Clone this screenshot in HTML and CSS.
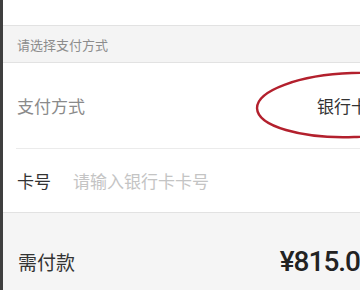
FILE: index.html
```html
<!DOCTYPE html>
<html lang="zh-CN">
<head>
<meta charset="utf-8">
<title>支付方式</title>
<link rel="stylesheet" href="styles.css">
</head>
<body>
<div class="screen">
  <div class="edge"></div>
  <div class="page">
    <div class="top"></div>
    <div class="section-head">请选择支付方式</div>
    <div class="form">
      <div class="row pay">
        <span class="label muted">支付方式</span>
        <span class="value">银行卡</span>
        <svg class="mark" width="150" height="72" viewBox="0 0 150 72">
          <ellipse cx="100" cy="36" rx="96" ry="32" fill="none" stroke="#b3202d" stroke-width="2.4" transform="rotate(-2 100 36)"/>
        </svg>
      </div>
      <div class="divider"></div>
      <div class="row card">
        <span class="label">卡号</span>
        <span class="placeholder">请输入银行卡卡号</span>
      </div>
    </div>
    <div class="total">
      <span class="total-label">需付款</span>
      <span class="amount">¥815.0</span>
    </div>
  </div>
</div>
</body>
</html>
```
FILE: styles.css
```css
html, body {
  margin: 0;
  padding: 0;
  height: 290px;
  overflow: hidden;
  background: #ffffff;
  font-family: "Noto Sans CJK SC", "Noto Sans", sans-serif;
}
.screen {
  display: flex;
  height: 290px;
}
.edge {
  width: 3px;
  flex-shrink: 0;
  background: #3f3f3f;
}
.page {
  width: 379px;
  flex-shrink: 0;
  display: flex;
  flex-direction: column;
}
.top {
  height: 25px;
  background: #ffffff;
}
.section-head {
  height: 36px;
  background: #f4f4f4;
  border-top: 1px solid #e2e2e2;
  border-bottom: 1px solid #e2e2e2;
  display: flex;
  align-items: center;
  padding-left: 14px;
  font-size: 13px;
  color: #8c8c8c;
}
.form {
  background: #ffffff;
}
.row {
  display: flex;
  align-items: center;
  padding: 0 14px;
  font-size: 17px;
}
.pay {
  height: 85px;
  position: relative;
}
.card {
  height: 63px;
}
.label {
  color: #333333;
}
.label.muted {
  color: #8a8a8a;
}
.value {
  margin-left: auto;
  color: #333333;
}
.placeholder {
  margin-left: 22px;
  color: #c4c4c4;
}
.mark {
  position: absolute;
  left: 250px;
  top: 6px;
}
.divider {
  height: 1px;
  margin-left: 13px;
  background: #ebebeb;
}
.total {
  flex: 1;
  background: #f5f5f5;
  border-top: 1px solid #e2e2e2;
  display: flex;
  align-items: center;
  padding: 20px 22px 0 15px;
}
.total-label {
  font-size: 19px;
  color: #333333;
}
.amount {
  margin-left: auto;
  font-family: Roboto, "Noto Sans", sans-serif;
  font-weight: 500;
  font-size: 28px;
  letter-spacing: -1px;
  color: #222222;
}
```
